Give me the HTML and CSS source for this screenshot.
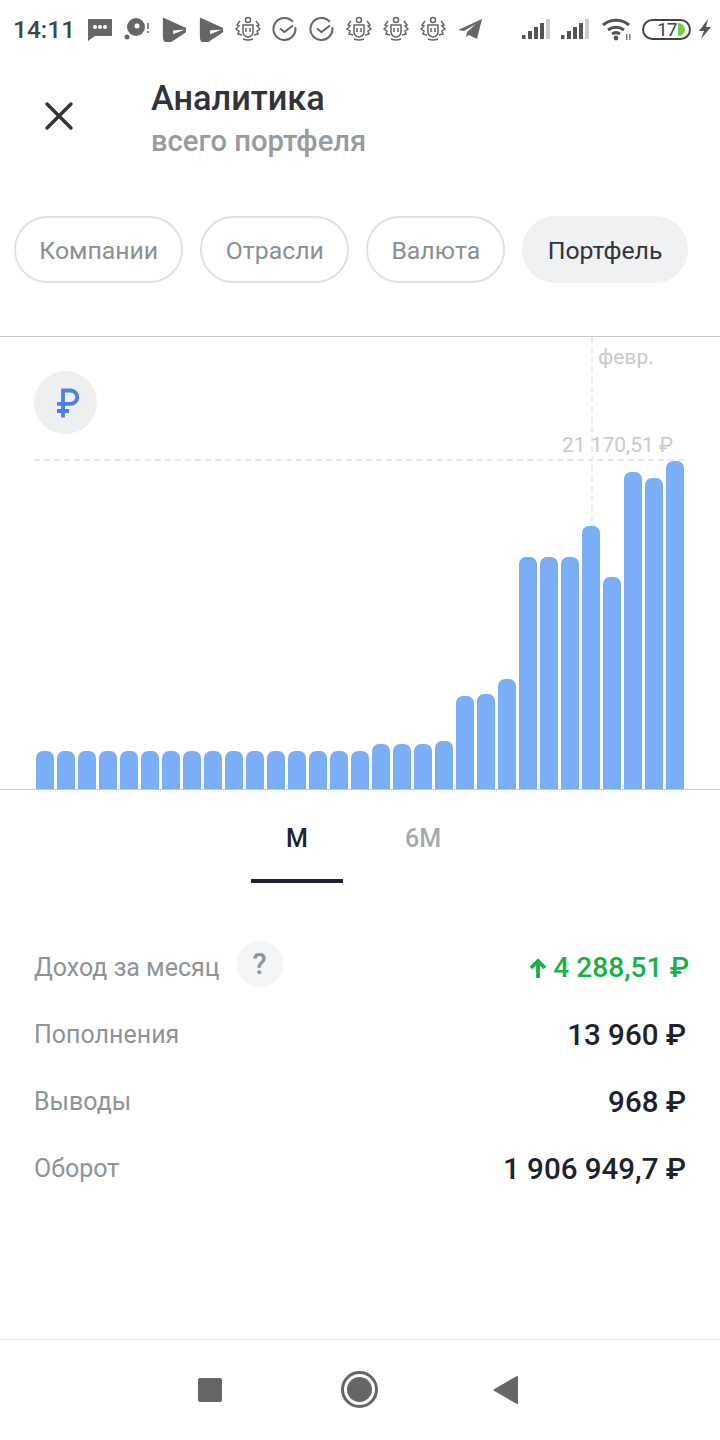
FILE: index.html
```html
<!DOCTYPE html>
<html lang="ru">
<head>
<meta charset="utf-8">
<title>Аналитика</title>
<link rel="stylesheet" href="styles.css">
</head>
<body>
<div class="page">
  <div class="status">
    <span class="time">14:11</span>
    <div class="status-icons">
      <svg class="si" viewBox="0 0 26 26"><path d="M1 3h24v17H8l-7 5z" fill="#666"/><circle cx="8" cy="11" r="2" fill="#fff"/><circle cx="13" cy="11" r="2" fill="#fff"/><circle cx="18" cy="11" r="2" fill="#fff"/></svg>
      <svg class="si" viewBox="0 0 26 26"><circle cx="12" cy="11" r="9" fill="#666"/><circle cx="13" cy="10" r="2.500" fill="#fff"/><circle cx="3" cy="21" r="2.500" fill="#666"/><path d="M23 7h2v6h-2zM23 15h2v2h-2z" fill="#888"/></svg>
      <svg class="si" viewBox="0 0 28 28"><use href="#play"/></svg>
      <svg class="si" viewBox="0 0 28 28"><use href="#play"/></svg>
      <svg class="si" viewBox="0 0 26 26"><use href="#crest"/></svg>
      <svg class="si" viewBox="0 0 26 26"><use href="#check"/></svg>
      <svg class="si" viewBox="0 0 26 26"><use href="#check"/></svg>
      <svg class="si" viewBox="0 0 26 26"><use href="#crest"/></svg>
      <svg class="si" viewBox="0 0 26 26"><use href="#crest"/></svg>
      <svg class="si" viewBox="0 0 26 26"><use href="#crest"/></svg>
      <svg class="si" viewBox="0 0 26 24"><path d="M1 13 25 2l-5 20-8-4-3 2 1-5 9-8-12 7z" fill="#666"/></svg>
    </div>
    <div class="status-right">
      <svg class="signal" viewBox="0 0 30 22"><use href="#bars"/></svg>
      <svg class="signal" viewBox="0 0 30 22"><use href="#bars"/></svg>
      <svg class="wifi" viewBox="0 0 32 24"><path d="M2 8a20 20 0 0 1 26 0M7 13a13 13 0 0 1 16 0M11 17a7 7 0 0 1 8 0" fill="none" stroke="#555" stroke-width="3"/><circle cx="15" cy="21" r="2.400" fill="#555"/><path d="M25 17h1.500v6H25zM28 17h1.500v6H28z" fill="#777"/></svg>
      <div class="battery"><span class="battery-num">17</span><span class="battery-fill"></span></div>
      <svg class="bolt" viewBox="0 0 14 22"><path d="M10 1 1 13h5l-3 8 10-12H8z" fill="#555"/></svg>
    </div>
  </div>

  <header class="header">
    <svg class="close" viewBox="0 0 30 30"><path d="M3 3 27 27M27 3 3 27" stroke="#30343a" stroke-width="3.400" stroke-linecap="round"/></svg>
    <div class="titles">
      <div class="title">Аналитика</div>
      <div class="subtitle">всего портфеля</div>
    </div>
  </header>

  <nav class="chips">
    <span class="chip">Компании</span>
    <span class="chip">Отрасли</span>
    <span class="chip">Валюта</span>
    <span class="chip chip-active">Портфель</span>
  </nav>

  <section class="chart">
    <div class="vguide"></div>
    <div class="month">февр.</div>
    <div class="badge"><svg class="badge-icon" viewBox="0 0 26 30"><path d="M8 29.500V2.500h7.500a6.700 6.700 0 0 1 0 13.400H2M2 23h12" fill="none" stroke="#4a82e0" stroke-width="3.800"/></svg></div>
    <div class="peak">21 170,51 ₽</div>
    <div class="hguide"></div>
    <div class="bars">
      <i class="bar" style="height:38px"></i><i class="bar" style="height:38px"></i><i class="bar" style="height:38px"></i><i class="bar" style="height:38px"></i>
      <i class="bar" style="height:38px"></i><i class="bar" style="height:38px"></i><i class="bar" style="height:38px"></i><i class="bar" style="height:38px"></i>
      <i class="bar" style="height:38px"></i><i class="bar" style="height:38px"></i><i class="bar" style="height:38px"></i><i class="bar" style="height:38px"></i>
      <i class="bar" style="height:38px"></i><i class="bar" style="height:38px"></i><i class="bar" style="height:38px"></i><i class="bar" style="height:38px"></i>
      <i class="bar" style="height:45px"></i><i class="bar" style="height:45px"></i><i class="bar" style="height:45px"></i><i class="bar" style="height:48px"></i>
      <i class="bar" style="height:93px"></i><i class="bar" style="height:95px"></i><i class="bar" style="height:110px"></i>
      <i class="bar" style="height:232px"></i><i class="bar" style="height:232px"></i><i class="bar" style="height:232px"></i><i class="bar" style="height:263px"></i>
      <i class="bar" style="height:212px"></i><i class="bar" style="height:317px"></i><i class="bar" style="height:311px"></i><i class="bar" style="height:328px"></i>
    </div>
  </section>

  <div class="tabs">
    <span class="tab tab-active">М</span>
    <span class="tab">6М</span>
  </div>

  <section class="rows">
    <div class="row">
      <div class="row-label">Доход за месяц<span class="help">?</span></div>
      <div class="row-value income"><svg class="arrow" viewBox="0 0 18 20"><path d="M9 20V3M2 10 9 3l7 7" fill="none" stroke="#17b14a" stroke-width="3.800"/></svg>4 288,51 ₽</div>
    </div>
    <div class="row"><div class="row-label">Пополнения</div><div class="row-value">13 960 ₽</div></div>
    <div class="row"><div class="row-label">Выводы</div><div class="row-value">968 ₽</div></div>
    <div class="row"><div class="row-label">Оборот</div><div class="row-value">1 906 949,7 ₽</div></div>
  </section>

  <footer class="navbar">
    <span class="nav-square"></span>
    <span class="nav-circle"><span class="nav-dot"></span></span>
    <svg class="nav-back" viewBox="0 0 26 30"><path d="M1.500 15 24 2v26z" fill="#666" stroke="#666" stroke-width="2" stroke-linejoin="round"/></svg>
  </footer>
</div>

<svg class="defs" width="0" height="0">
  <defs>
    <path id="play" d="M3 3 26 13.500 12 14.500V21L26 15.500V17L11 27Q3 30 3 23Z" fill="#666" stroke="#666" stroke-width="2" stroke-linejoin="round"/>
    <g id="crest" fill="none" stroke="#666" stroke-width="1.500">
      <circle cx="13" cy="4" r="2.500"/>
      <path d="M8 9h10v7q0 4-5 5-5-1-5-5z"/>
      <path d="M11 12v4M15 12v4"/>
      <path d="M5 5 2 9l2 1-3 3 3 2-1 3 4 1M21 5l3 4-2 1 3 3-3 2 1 3-4 1M8 23q5 2 10 0"/>
    </g>
    <g id="check" fill="none" stroke="#666" stroke-width="2">
      <path d="M20.900 5.900A11 11 0 1 0 23.300 11.100"/>
      <path d="M8 12.500l4.500 3.500L21 9.500"/>
    </g>
    <g id="bars">
      <rect x="1" y="17" width="3.500" height="4" fill="#555"/>
      <rect x="7" y="13" width="4" height="8" fill="#555"/>
      <rect x="13" y="9" width="4" height="12" fill="#555"/>
      <rect x="19" y="5" width="4" height="16" fill="#555"/>
      <rect x="25" y="1" width="4" height="20" fill="#ccc"/>
    </g>
  </defs>
</svg>
</body>
</html>
```
FILE: styles.css
```css
* { box-sizing: border-box; }
html, body { margin: 0; padding: 0; background: #fff; }
body { font-family: Roboto, "Noto Sans", sans-serif; }
.page { width: 720px; height: 1440px; display: flex; flex-direction: column; overflow: hidden; }
.defs { position: absolute; }

.status { height: 58px; display: flex; align-items: center; padding: 0 8px 0 13px; }
.time { font-size: 24.500px; font-weight: 500; color: #444; width: 74px; }
.status-icons { display: flex; align-items: center; gap: 11px; }
.si { height: 26px; width: 26px; flex: none; }
.status-right { margin-left: auto; display: flex; align-items: center; gap: 9px; }
.signal { width: 30px; height: 22px; }
.wifi { width: 32px; height: 24px; margin-left: 2px; }
.battery { width: 49px; height: 21px; border: 2px solid #444; border-radius: 11px; display: flex; align-items: center; padding-left: 13px; gap: 2px; }
.battery-num { font-size: 19px; color: #444; line-height: 1; letter-spacing: -1px; }
.battery-fill { width: 7px; height: 13px; background: #6fd13c; border-radius: 0 7px 7px 0; }
.bolt { width: 14px; height: 22px; margin-left: -2px; }

.header { height: 158px; display: flex; align-items: flex-start; padding: 19px 0 0 44px; }
.close { width: 30px; height: 30px; margin-top: 24px; flex: none; }
.titles { margin-left: 77px; }
.title { font-size: 34.300px; line-height: 42px; font-weight: 500; color: #30343a; }
.subtitle { font-size: 29.200px; line-height: 44px; font-weight: 500; color: #979a9e; }

.chips { display: flex; gap: 17px; padding-left: 14px; height: 120px; align-items: flex-start; }
.chip { height: 67px; display: flex; align-items: center; padding: 2px 23.300px 0; border: 2px solid #dfe1e4; border-radius: 34px; font-size: 24.800px; color: #8b8f94; }
.chip-active { background: #eff1f3; border-color: #eff1f3; color: #30343a; }

.chart { position: relative; height: 454px; border-top: 1px solid #c8c8c8; border-bottom: 1px solid #c8c8c8; display: flex; align-items: flex-end; padding-left: 36px; }
.bars { position: relative; display: flex; align-items: flex-end; gap: 3px; }
.bar { display: block; width: 18px; background: #7aaef8; border-radius: 7px 7px 0 0; }
.vguide { position: absolute; left: 591px; top: 0; bottom: 0; border-left: 2px dashed #ecedef; }
.hguide { position: absolute; left: 34px; right: 36px; top: 122px; border-top: 2px dashed #e6e8ea; }
.month { position: absolute; left: 598px; top: 8px; font-size: 21px; color: #c9cacc; }
.peak { position: absolute; right: 47px; top: 96px; font-size: 21px; color: #c9cacc; }
.badge { position: absolute; left: 34px; top: 34px; width: 63px; height: 63px; border-radius: 50%; background: #edeff1; display: flex; align-items: center; justify-content: center; }
.badge-icon { width: 26px; height: 30px; margin-left: 4px; }

.tabs { height: 93px; display: flex; gap: 34px; padding-left: 251px; }
.tab { width: 92px; height: 93px; display: flex; align-items: center; justify-content: center; font-size: 25px; font-weight: 500; color: #a6a9ad; padding: 8px 0 4px; }
.tab-active { color: #1c2230; border-bottom: 4px solid #1c2230; padding-bottom: 0; }

.rows { padding: 51px 34px 0; display: flex; flex-direction: column; height: 456px; }
.row { height: 67px; display: flex; align-items: center; justify-content: space-between; }
.row-label { display: flex; align-items: center; font-size: 25px; color: #8f9397; }
.row-value { display: flex; align-items: center; font-size: 29.500px; font-weight: 500; color: #1c2230; }
.income { color: #17b14a; font-size: 28.200px; margin-right: -3px; }
.arrow { width: 18px; height: 20px; margin-right: 6px; }
.help { width: 46px; height: 46px; margin-left: 17px; margin-top: -8px; border-radius: 50%; background: #f4f5f7; display: flex; align-items: center; justify-content: center; font-size: 29px; font-weight: 500; color: #8f9397; }

.navbar { flex: 1; border-top: 1px solid #e6e6e6; display: flex; align-items: center; padding: 0 0 1px 198px; }
.nav-square { width: 24px; height: 24px; background: #666; border-radius: 2px; }
.nav-circle { width: 37px; height: 37px; margin-left: 119px; border: 3px solid #666; border-radius: 50%; display: flex; align-items: center; justify-content: center; }
.nav-dot { width: 25px; height: 25px; background: #666; border-radius: 50%; }
.nav-back { width: 26px; height: 30px; margin-left: 115px; }
```
